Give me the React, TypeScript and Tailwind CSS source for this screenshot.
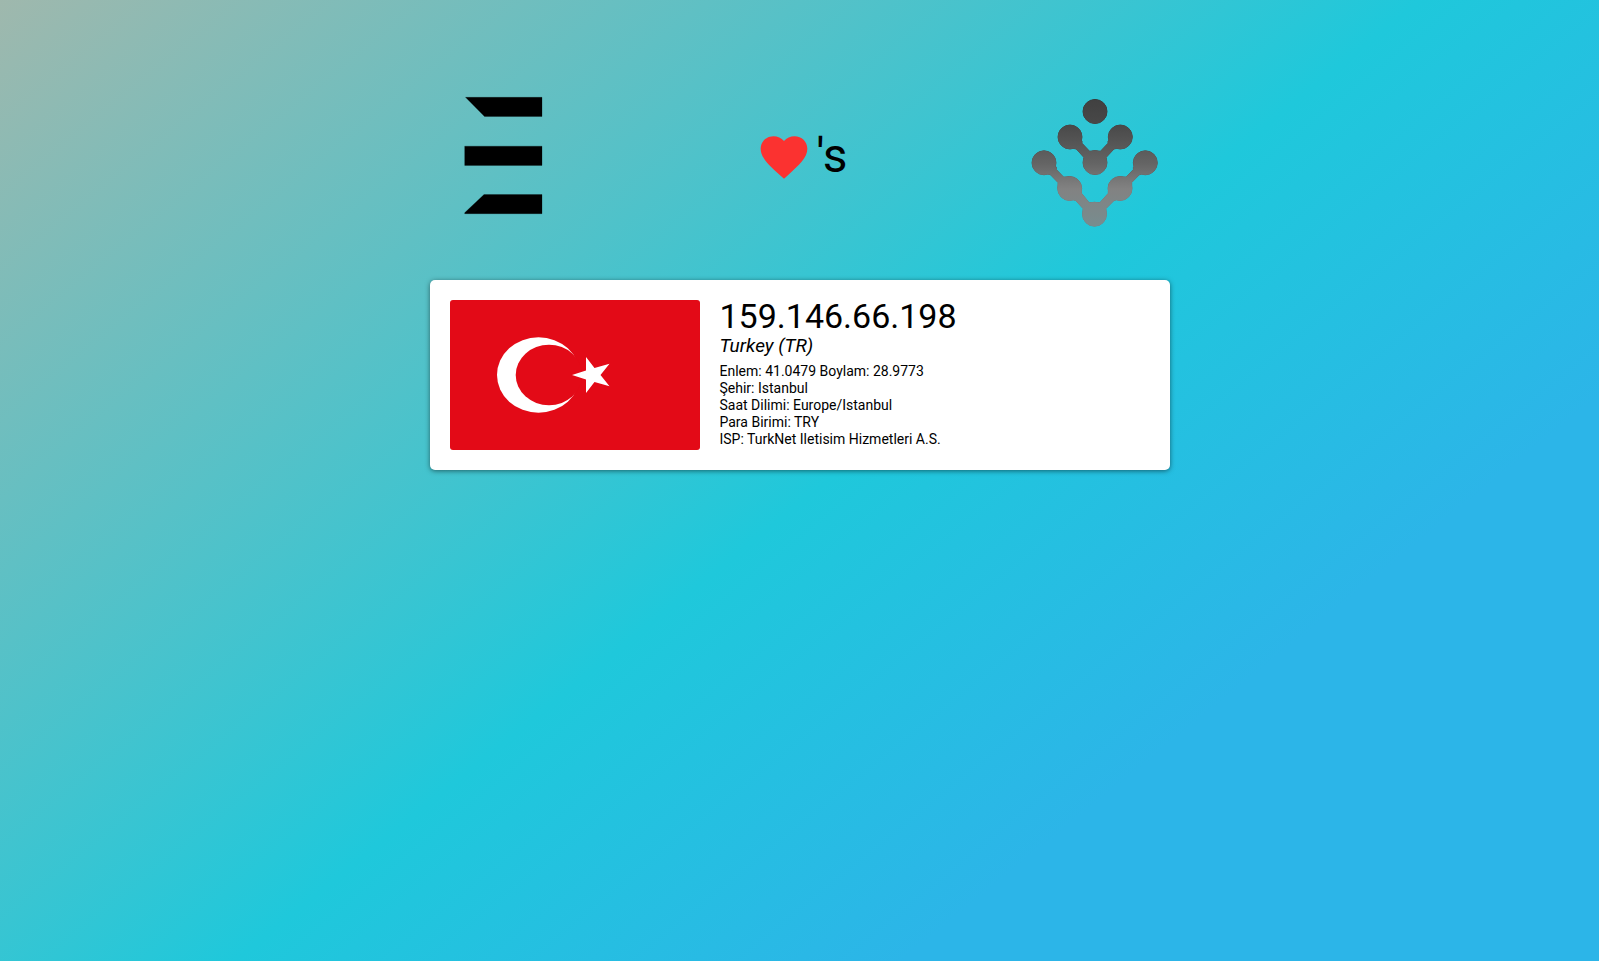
const details = [
  "Enlem: 41.0479 Boylam: 28.9773",
  "Şehir: Istanbul",
  "Saat Dilimi: Europe/Istanbul",
  "Para Birimi: TRY",
  "ISP: TurkNet Iletisim Hizmetleri A.S.",
];

function BarsLogo() {
  return (
    <svg className="h-32 w-20" viewBox="0 0 80 128" role="img" aria-label="E">
      <path d="M1.5 5.3H78V24.5H20.5ZM.7 54.2H78V73.4H.7ZM20 102.5H78V121.7H.7V120.7Z" stroke="#000" strokeOpacity=".35" strokeWidth=".7" />
    </svg>
  );
}

function Heart() {
  return (
    <svg className="size-14" viewBox="0 -.4 24 24" fill="#fb3230" role="img" aria-label="love">
      <path d="M12 21.35l-1.45-1.32C5.4 15.36 2 12.28 2 8.5 2 5.42 4.42 3.1 7.5 3.1c1.74 0 3.41.81 4.5 2.09C13.09 3.91 14.76 3.1 16.5 3.1 19.58 3.1 22 5.42 22 8.5c0 3.78-3.4 6.86-8.55 11.54L12 21.35z" />
    </svg>
  );
}

function NodesShape() {
  return (
    <>
      <circle cx="65" cy="13.5" r="12" />
      <circle cx="40" cy="39" r="12" />
      <circle cx="90.3" cy="39" r="12" />
      <circle cx="65" cy="64.6" r="12" />
      <circle cx="14" cy="64.8" r="12" />
      <circle cx="115.3" cy="64.8" r="12" />
      <circle cx="39.7" cy="90.5" r="12" />
      <circle cx="90" cy="90.5" r="12" />
      <circle cx="64.5" cy="116.2" r="12" />
      <path d="M40 39L52 43V45.3L59.5 53.2H70.5L78 45.3V43L90.3 39L86 50.5L84 51L76 59.5V64H54V59.5L46.3 51L44 50.5Z" />
      <path d="M14 64.8L26.3 69V71.5L33.5 79H39.7V90.5H28V84.5L20.5 76.8L18 76Z" />
      <path d="M115.3 64.8L103.4 69V71.5L96.2 79H90V90.5H101.7V84.5L109.3 76.8L111.5 76Z" />
      <path d="M39.7 90.5L51.5 93V95.3L59 104.5H70L78.3 95.3V93L90 90.5L86 102L84 102.5L76 110.5V116H53V110.5L45.7 102.5L43.5 102Z" />
    </>
  );
}

function NodesLogo() {
  return (
    <svg className="h-[138px] w-[130px]" viewBox="0 -6 130 138" role="img" aria-label="Yonca">
      <defs>
        <linearGradient id="nodes-fill" gradientUnits="userSpaceOnUse" x1="0" y1="0" x2="0" y2="130">
          <stop offset="0" stopColor="#404040" />
          <stop offset=".2" stopColor="#484848" />
          <stop offset=".5" stopColor="#646464" />
          <stop offset=".7" stopColor="#828282" />
          <stop offset=".84" stopColor="#7d8788" />
          <stop offset="1" stopColor="#778d90" />
        </linearGradient>
        <linearGradient id="nodes-edge" gradientUnits="userSpaceOnUse" x1="0" y1="0" x2="0" y2="130">
          <stop offset="0" stopColor="#303030" />
          <stop offset=".5" stopColor="#5a5555" />
          <stop offset=".7" stopColor="#7a7676" />
          <stop offset="1" stopColor="#708589" />
        </linearGradient>
      </defs>
      <g fill="url(#nodes-edge)" stroke="url(#nodes-edge)" strokeWidth="1">
        <NodesShape />
      </g>
      <g fill="url(#nodes-fill)">
        <NodesShape />
      </g>
    </svg>
  );
}

export default function App() {
  return (
    <div className="min-h-screen bg-[linear-gradient(141deg,#9fb8ad_0%,#1fc8db_51%,#2cb5e8_75%)] px-4 font-['Roboto',sans-serif] text-black">
      <main className="mx-auto max-w-[740px] pt-[92px]">
        <header className="flex items-start justify-between pr-[9px] pl-[34px]">
          <BarsLogo />
          <p className="flex h-32 items-center gap-1 pl-[30px] text-5xl">
            <Heart />
            <span>'s</span>
          </p>
          <NodesLogo />
        </header>
        <section className="mt-[50px] flex gap-5 rounded-[5px] bg-white p-5 shadow-[0_1px_5px_rgba(0,0,0,0.5)]">
          <svg className="h-[150px] w-[250px] shrink-0 rounded-[3px]" viewBox="0 0 250 150" role="img" aria-label="Turkey">
            <rect width="250" height="150" fill="#e30a17" />
            <ellipse cx="88.5" cy="75" rx="41.5" ry="37.7" fill="#fff" />
            <ellipse cx="99" cy="75" rx="33.3" ry="30.2" fill="#e30a17" />
            <path fill="#fff" d="M122 75L136 70.5V57L144.5 68L159.5 63.8L150.5 75L159.5 86.2L144.5 82L136 93V79.5Z" />
          </svg>
          <div className="min-w-0">
            <h1 className="text-[34px] leading-8">159.146.66.198</h1>
            <p className="text-[19px] leading-7 italic">Turkey (TR)</p>
            <ul className="mt-[3px] text-sm leading-[17px]">
              {details.map((line) => (
                <li key={line}>{line}</li>
              ))}
            </ul>
          </div>
        </section>
      </main>
    </div>
  );
}
